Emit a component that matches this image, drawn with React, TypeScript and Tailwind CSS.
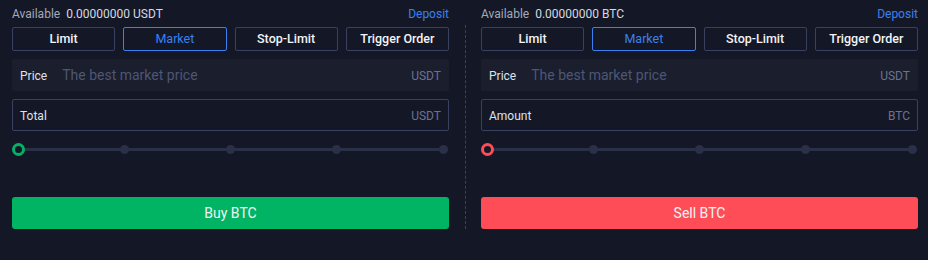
import React from 'react';

interface PanelProps {
  side: 'buy' | 'sell';
}

const tabs = ['Limit', 'Market', 'Stop-Limit', 'Trigger Order'];

// Percentage slider with the four stop dots
const Slider: React.FC<{ color: string }> = ({ color }) => (
  <div className="relative h-[36px] mx-[6px]">
    <div className="absolute left-0 right-0 top-[17px] h-[3px] bg-[#2a3048]" />
    {[25, 50, 75, 100].map((p) => (
      <div
        key={p}
        className="absolute top-[14px] h-[9px] w-[9px] -ml-[4.5px] rounded-full bg-[#2a3048]"
        style={{ left: `${p}%` }}
      />
    ))}
    <div
      className={`absolute left-0 top-[12px] -ml-[6.5px] h-[13px] w-[13px] rounded-full border-[3px] bg-[#141826] ${color}`}
    />
  </div>
);

const TradePanel: React.FC<PanelProps> = ({ side }) => {
  const isBuy = side === 'buy';
  return (
    <div className="flex w-[437px] flex-col">
      <div className="flex h-[27px] items-center justify-between text-[12px]">
        <div>
          <span className="text-[#a3a8ba]">Available</span>
          <span className="ml-[6px] text-[#d5d8e2]">0.00000000 {isBuy ? 'USDT' : 'BTC'}</span>
        </div>
        <span className="text-[#3a80f0]">Deposit</span>
      </div>

      <div className="flex gap-[8px]">
        {tabs.map((t) => (
          <div
            key={t}
            className={`flex h-[24px] flex-1 items-center justify-center rounded-[2px] border text-[12.5px] ${
              t === 'Market'
                ? 'border-[#3a80f0] text-[#3a80f0]'
                : 'border-[#3a4160] font-medium text-[#f2f3f7]'
            }`}
          >
            {t}
          </div>
        ))}
      </div>

      <div className="mt-[8px] flex h-[32px] items-center rounded-[2px] bg-[#1a1e2d] px-[8px] pt-px">
        <span className="text-[12px] text-[#dfe2ea]">Price</span>
        <span className="ml-[15px] flex-1 text-[14px] text-[#4e5675]">The best market price</span>
        <span className="text-[12px] text-[#6b7291]">USDT</span>
      </div>

      <div className="mt-[8px] flex h-[32px] items-center rounded-[2px] border border-[#3a4160] px-[7px] pt-px">
        <span className="flex-1 text-[12px] text-[#dfe2ea]">{isBuy ? 'Total' : 'Amount'}</span>
        <span className="text-[12px] text-[#6b7291]">{isBuy ? 'USDT' : 'BTC'}</span>
      </div>

      <Slider color={isBuy ? 'border-[#00b464]' : 'border-[#ff4d57]'} />

      <button
        className={`mt-[30px] h-[32px] rounded-[3px] pt-px text-[14px] text-[#f2f3f6] ${
          isBuy ? 'bg-[#00b464]' : 'bg-[#ff4d57]'
        }`}
      >
        {isBuy ? 'Buy BTC' : 'Sell BTC'}
      </button>
    </div>
  );
};

export default function App() {
  return (
    <div
      className="flex h-[260px] w-[928px] bg-[#141826] pl-[12px]"
      style={{ fontFamily: 'Roboto, "Liberation Sans", sans-serif' }}
    >
      <TradePanel side="buy" />
      <div className="flex w-[32px] justify-center pt-[25px]">
        <div className="h-[204px] border-l border-dashed border-[#3a4160]" />
      </div>
      <TradePanel side="sell" />
    </div>
  );
}
